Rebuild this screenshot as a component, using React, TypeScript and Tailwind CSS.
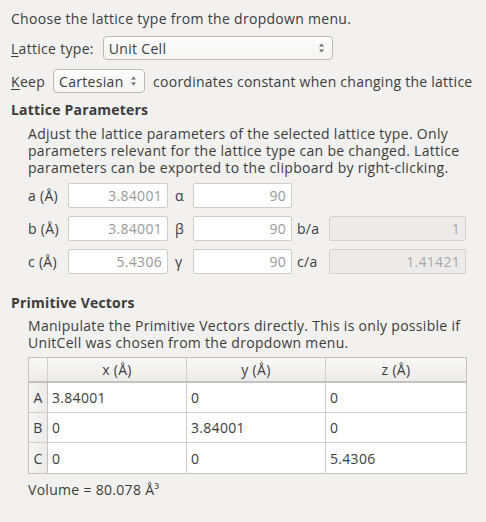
import React from 'react';

const font = { fontFamily: '"Open Sans", "DejaVu Sans", sans-serif' };

function Arrows() {
  return (
    <svg width="7" height="12" viewBox="0 0 7 12" className="shrink-0">
      <path d="M3.5 1.5 L6 4.5 L1 4.5 Z" fill="#6b6b6b" />
      <path d="M3.5 10.5 L6 7.5 L1 7.5 Z" fill="#6b6b6b" />
    </svg>
  );
}

function Combo({ value, className }: { value: string; className: string }) {
  return (
    <div
      className={`flex items-center justify-between h-[24px] rounded-[4px] border border-[#bdbab5] bg-gradient-to-b from-[#fdfdfd] to-[#f4f4f3] pl-[5px] pr-[7px] ${className}`}
    >
      <span>{value}</span>
      <Arrows />
    </div>
  );
}

function Field({ value, disabled, className }: { value: string; disabled?: boolean; className: string }) {
  return (
    <div
      className={`h-[25px] flex items-center justify-end pr-[5px] rounded-[2px] border ${
        disabled ? 'border-[#d3d1ce] bg-[#ecebea] text-[#a9a7a4]' : 'border-[#cfcdca] bg-white text-[#9a9896]'
      } ${className}`}
    >
      {value}
    </div>
  );
}

const rows = [
  { h: 'A', v: ['3.84001', '0', '0'] },
  { h: 'B', v: ['0', '3.84001', '0'] },
  { h: 'C', v: ['0', '0', '5.4306'] },
];

export default function App() {
  return (
    <div
      style={font}
      className="w-[486px] h-[522px] overflow-hidden bg-[#f2f1f0] text-[#3c3c3c] text-[14px] leading-[17px] tracking-[0.3px] pl-[11px] pt-[10px] whitespace-nowrap"
    >
      <div>Choose the lattice type from the dropdown menu.</div>

      <div className="flex items-center mt-[9px] gap-[8px]">
        <span>
          <span className="underline underline-offset-2">L</span>attice type:
        </span>
        <Combo value="Unit Cell" className="w-[230px] ml-[1px]" />
      </div>

      <div className="flex items-center mt-[9px] gap-[8px]">
        <span>
          <span className="underline underline-offset-2">K</span>eep
        </span>
        <Combo value="Cartesian" className="w-[92px]" />
        <span className="tracking-[0.25px]">coordinates constant when changing the lattice</span>
      </div>

      <div className="font-bold tracking-[0.2px] mt-[8px]">Lattice Parameters</div>
      <div className="pl-[17px] mt-[7px]">
        <div>Adjust the lattice parameters of the selected lattice type. Only</div>
        <div>parameters relevant for the lattice type can be changed. Lattice</div>
        <div>parameters can be exported to the clipboard by right-clicking.</div>
      </div>

      <div className="pl-[17px] mt-[7px] flex flex-col gap-[8px]">
        <div className="flex items-center">
          <span className="w-[40px]">a (Å)</span>
          <Field value="3.84001" className="w-[100px]" />
          <span className="w-[25px] pl-[7px]">α</span>
          <Field value="90" className="w-[99px]" />
        </div>
        <div className="flex items-center">
          <span className="w-[40px]">b (Å)</span>
          <Field value="3.84001" className="w-[100px]" />
          <span className="w-[25px] pl-[7px]">β</span>
          <Field value="90" className="w-[99px]" />
          <span className="w-[37px] pl-[5px]">b/a</span>
          <Field value="1" disabled className="w-[137px]" />
        </div>
        <div className="flex items-center">
          <span className="w-[40px]">c (Å)</span>
          <Field value="5.4306" className="w-[100px]" />
          <span className="w-[25px] pl-[7px]">γ</span>
          <Field value="90" className="w-[99px]" />
          <span className="w-[37px] pl-[5px]">c/a</span>
          <Field value="1.41421" disabled className="w-[137px]" />
        </div>
      </div>

      <div className="font-bold tracking-[0.2px] mt-[20px]">Primitive Vectors</div>
      <div className="pl-[17px] mt-[6px]">
        <div>Manipulate the Primitive Vectors directly. This is only possible if</div>
        <div>UnitCell was chosen from the dropdown menu.</div>
      </div>

      <div className="ml-[17px] mt-[6px] w-[439px] border border-[#c4c2bf] bg-white">
        <div className="grid grid-cols-[19px_139px_139px_1fr] h-[25px] bg-gradient-to-b from-[#f8f8f7] to-[#ecebea] border-b-2 border-[#c4c2bf]">
          <div className="border-r border-[#d0cecb]" />
          <div className="border-r border-[#d0cecb] flex items-center justify-center">x (Å)</div>
          <div className="border-r border-[#d0cecb] flex items-center justify-center">y (Å)</div>
          <div className="flex items-center justify-center">z (Å)</div>
        </div>
        {rows.map((r, i) => (
          <div key={r.h} className={`grid grid-cols-[19px_139px_139px_1fr] h-[30px] ${i < 2 ? 'border-b border-[#d0cecb]' : ''}`}>
            <div className="bg-gradient-to-r from-[#f5f5f4] to-[#ecebea] border-r border-[#c4c2bf] flex items-center justify-center">
              {r.h}
            </div>
            {r.v.map((v, j) => (
              <div key={j} className={`flex items-center pl-[4px] ${j < 2 ? 'border-r border-[#d0cecb]' : ''}`}>
                {v}
              </div>
            ))}
          </div>
        ))}
      </div>

      <div className="pl-[17px] mt-[7px]">Volume = 80.078 Å³</div>
    </div>
  );
}
